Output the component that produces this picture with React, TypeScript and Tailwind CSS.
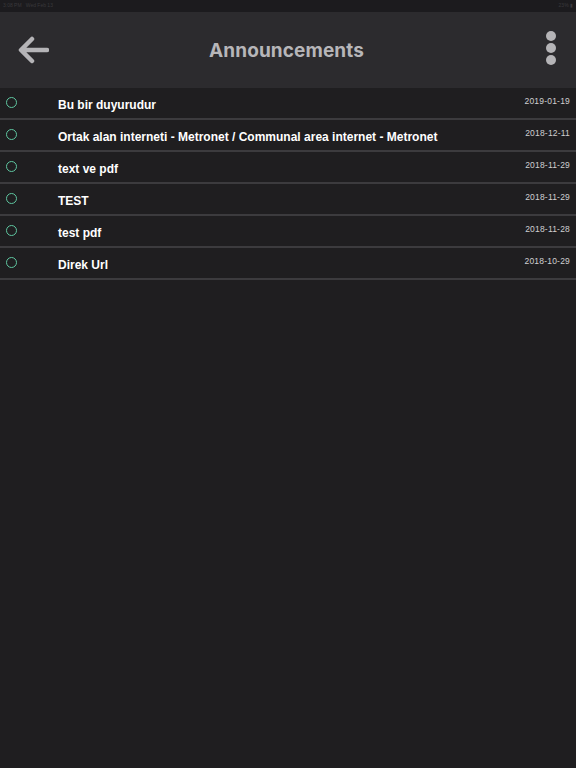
import React from "react";

const items = [
  { title: "Bu bir duyurudur", date: "2019-01-19" },
  { title: "Ortak alan interneti - Metronet / Communal area internet - Metronet", date: "2018-12-11" },
  { title: "text ve pdf", date: "2018-11-29" },
  { title: "TEST", date: "2018-11-29" },
  { title: "test pdf", date: "2018-11-28" },
  { title: "Direk Url", date: "2018-10-29" },
];

export default function App() {
  return (
    <div
      className="w-[576px] h-[768px] bg-[#1f1e20] flex flex-col overflow-hidden"
      style={{ fontFamily: "'Liberation Sans', Arial, sans-serif" }}
    >
      <div className="h-[12px] bg-[#1c1b1e] flex items-center justify-between px-[3px] text-[5px] text-[#3a393c]">
        <span>3:08 PM &nbsp; Wed Feb 13</span>
        <span>23% ▮</span>
      </div>
      <div className="h-[76px] bg-[#2c2b2e] flex items-center px-[17px]">
        <div className="flex-1 flex">
          <svg width="32" height="30" viewBox="0 0 32 30" className="mt-[-1px]">
            <path d="M30 15 H5 M15 4 L4 15 L15 26" stroke="#b5b4b7" strokeWidth="4.5" fill="none" strokeLinecap="round" strokeLinejoin="round" />
          </svg>
        </div>
        <div
          className="text-[19px] font-bold text-[#b7b6b9] tracking-[0.1px] mt-[2px]"
          style={{ fontFamily: "Inter, 'Liberation Sans', sans-serif" }}
        >
          Announcements
        </div>
        <div className="flex-1 flex justify-end pr-[3px]">
          <div className="flex flex-col gap-[2px] mt-[-4px]">
            <div className="w-[10px] h-[10px] rounded-full bg-[#b5b4b7]" />
            <div className="w-[10px] h-[10px] rounded-full bg-[#b5b4b7]" />
            <div className="w-[10px] h-[10px] rounded-full bg-[#b5b4b7]" />
          </div>
        </div>
      </div>
      <div className="flex flex-col">
        {items.map((it) => (
          <div key={it.title} className="h-[32px] border-b-2 border-[#3c3b3e] flex items-center relative">
            <div className="absolute left-[6px] top-[9px] w-[11px] h-[11px] rounded-full border-[1.5px] border-[#5fc7a1]" />
            <div className="ml-[58px] flex-1 text-[12px] font-bold text-white mt-[3px]">{it.title}</div>
            <div className="text-[8.5px] text-[#cfcfd1] mr-[6px] mt-[-3px] tracking-[0.2px]">{it.date}</div>
          </div>
        ))}
      </div>
    </div>
  );
}
